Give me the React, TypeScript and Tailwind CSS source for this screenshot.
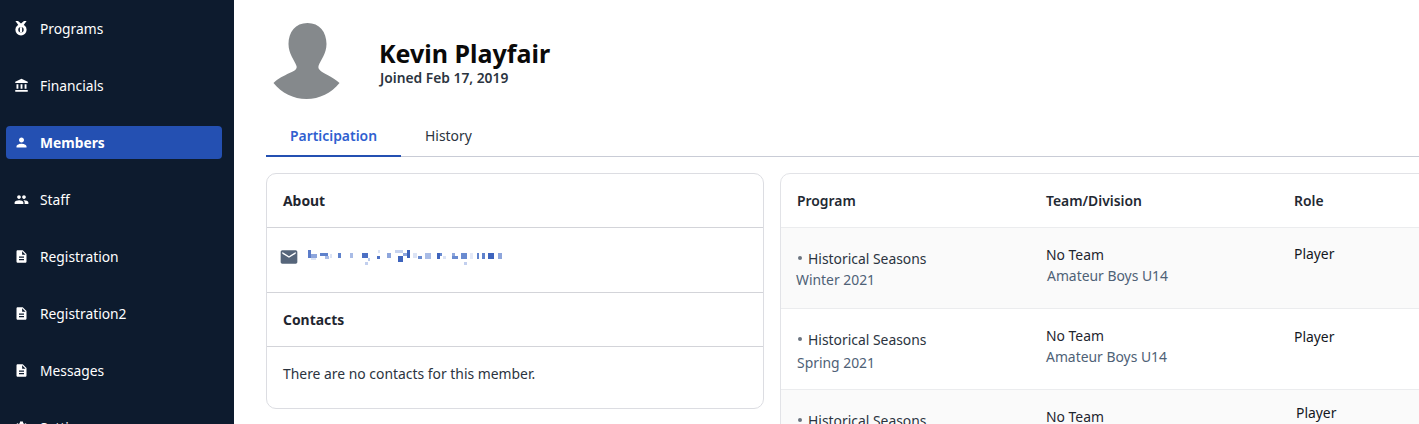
import React from "react";
import { MdAccountBalance, MdPerson, MdPeople, MdDescription, MdEmail, MdSettings } from "react-icons/md";

function Medal() {
  return (
    <svg width="18" height="18" viewBox="0 0 18 18" fill="none">
      <path d="M3.4 1H6L9 3.6 12 1h2.6L11 6H7z" fill="white" />
      <circle cx="9" cy="9.8" r="5.6" fill="white" />
      <circle cx="9" cy="9.8" r="2.7" fill="#0d1b2e" />
      <rect x="7.9" y="7.2" width="2.2" height="5.2" fill="white" />
    </svg>
  );
}

function Avatar() {
  return (
    <svg width="67" height="76" viewBox="0 0 66 76" className="shrink-0">
      <path
        d="M34 0C46 0 53 9 53 21C53 31 47 37 45 43C44 47 49 49 54 52C59 55 63 57 66 60C58 70 46 76 33 76C20 76 8 70 0 60C5 55 10 53 16 50C21 48 24 46 23 43C21 37 15 31 15 21C15 9 22 0 34 0Z"
        fill="#85898c"
      />
    </svg>
  );
}

const mosaic: [number, number, number, number, string][] = [
  [309, 250, 3, 8, "#5b7cc9"], [312, 254, 6, 4, "#8ea6dc"], [312, 258, 5, 2, "#dbe3f5"],
  [321, 253, 8, 3, "#5f82cc"], [326, 256, 4, 3, "#a9bce6"], [331, 254, 2, 4, "#dbe3f5"],
  [339, 253, 3, 5, "#5f82cc"], [351, 253, 3, 5, "#a9bce6"], [363, 253, 6, 5, "#4c70c4"],
  [369, 258, 2, 3, "#b8c8ea"], [366, 262, 3, 3, "#c2cfee"], [378, 256, 3, 3, "#4c70c4"],
  [379, 250, 2, 3, "#dbe3f5"], [388, 253, 4, 5, "#8ea6dc"],
  [396, 250, 8, 3, "#c5d2ef"], [408, 250, 3, 8, "#3e64bd"], [399, 256, 5, 6, "#3e64bd"],
  [404, 253, 4, 3, "#8ea6dc"], [414, 253, 4, 5, "#dbe3f5"], [419, 256, 4, 3, "#6a8bd0"],
  [426, 253, 6, 6, "#a9bce6"], [438, 253, 3, 6, "#3e64bd"], [441, 253, 2, 3, "#6a8bd0"],
  [444, 256, 3, 3, "#dbe3f5"], [453, 256, 6, 3, "#6a8bd0"], [453, 253, 3, 3, "#8ea6dc"],
  [462, 253, 6, 6, "#6a8bd0"], [465, 262, 3, 3, "#c2cfee"], [471, 253, 3, 6, "#e4e9f7"],
  [478, 253, 2, 6, "#5f82cc"], [483, 253, 3, 6, "#5f82cc"], [489, 253, 6, 6, "#3e64bd"],
  [499, 253, 4, 6, "#8ea6dc"],
];

function BlurredEmail() {
  return (
    <svg width="196" height="16" viewBox="308 250 196 16" className="block">
      {mosaic.map(([x, y, w, h, c], i) => (
        <rect key={i} x={x} y={y} width={w} height={h} fill={c} />
      ))}
    </svg>
  );
}

const nav: { label: string; icon: React.ReactNode; active?: boolean }[] = [
  { label: "Programs", icon: <Medal /> },
  { label: "Financials", icon: <MdAccountBalance size={15} /> },
  { label: "Members", icon: <MdPerson size={15} />, active: true },
  { label: "Staff", icon: <MdPeople size={15} /> },
  { label: "Registration", icon: <MdDescription size={15} /> },
  { label: "Registration2", icon: <MdDescription size={15} /> },
  { label: "Messages", icon: <MdDescription size={15} /> },
  { label: "Settings", icon: <MdSettings size={15} /> },
];

function Sidebar() {
  return (
    <aside className="w-[234px] shrink-0 bg-[#0d1b2e] pt-3 px-[6px] flex flex-col gap-6 overflow-hidden">
      {nav.map((n) => (
        <div
          key={n.label}
          className={`flex items-center h-[33px] w-[216px] shrink-0 rounded-[4px] pl-[6px] text-white text-[13.8px] leading-5 ${
            n.active ? "bg-[#2450b2] font-bold" : ""
          }`}
        >
          <span className="w-[18px] flex justify-center">{n.icon}</span>
          <span className="ml-[10px]">{n.label}</span>
        </div>
      ))}
    </aside>
  );
}

function Row({
  bg,
  prog,
  sub,
  subGap,
  subX,
  teamSubX,
  rolePt,
  roleX,
}: {
  bg: string;
  prog: string;
  sub: string;
  subGap: string;
  subX: string;
  teamSubX: string;
  rolePt: string;
  roleX: string;
}) {
  return (
    <div className={`flex h-[81px] shrink-0 border-b border-[#ebecee] pl-4 text-[13.9px] leading-5 ${bg}`}>
      <div className="w-[249px] shrink-0 pt-[21px]">
        <div className="text-[#2b3440] flex items-center">
          <span className="w-[4px] h-[4px] rounded-full bg-[#6b7480] ml-[1px] mr-[6px] -mt-[3px]" />
          <span>{prog}</span>
        </div>
        <div className={`text-[#4e6176] ${subGap} ${subX}`}>{sub}</div>
      </div>
      <div className="w-[248px] shrink-0 pt-[17px]">
        <div className="text-[#1f2630]">No Team</div>
        <div className={`text-[#4e6176] mt-[1px] ${teamSubX}`}>Amateur Boys U14</div>
      </div>
      <div className={`text-[#14181e] ${rolePt} ${roleX}`}>Player</div>
    </div>
  );
}

export default function App() {
  return (
    <div
      className="flex h-[424px] w-[1419px] overflow-hidden bg-white"
      style={{ fontFamily: '"Noto Sans", sans-serif' }}
    >
      <Sidebar />
      <main className="flex-1 min-w-0 pl-8 overflow-hidden">
        <div className="flex h-[116px] shrink-0 pl-[7px] pt-[23px]">
          <Avatar />
          <div className="ml-[39px] pt-[14px]">
            <h1 className="text-[25px] leading-[32px] font-bold text-[#0a0a0a]">Kevin Playfair</h1>
            <p className="ml-[1px] mt-[2px] text-[13.8px] leading-[14px] font-semibold text-[#2b3440]">Joined Feb 17, 2019</p>
          </div>
        </div>
        <div className="flex h-[41px] border-b border-[#c9ccd6] text-[13.9px] w-[1153px]">
          <div className="w-[135px] h-[41px] border-b-[2px] border-[#2450b2] text-center text-[#2f5fd0] font-semibold pt-[10px] leading-5">
            Participation
          </div>
          <div className="ml-6 text-[#2b3440] pt-[10px] leading-5">History</div>
        </div>
        <div className="flex gap-4 mt-4 items-start">
          <section className="w-[498px] h-[236px] shrink-0 border border-[#dcdde2] rounded-[10px] text-[#1f2630]">
            <div className="h-[54px] flex items-center px-4 pt-[2px] border-b border-[#d3d4d9] text-[13.9px] font-bold">About</div>
            <div className="h-[65px] flex items-start pt-[19px] pl-[12px] border-b border-[#d3d4d9] text-[#56657a]">
              <MdEmail size={20} className="shrink-0" />
              <span className="ml-[8px] mt-[3px]"><BlurredEmail /></span>
            </div>
            <div className="h-[54px] flex items-center px-4 pt-[2px] border-b border-[#d3d4d9] text-[13.9px] font-bold">Contacts</div>
            <div className="px-4 pt-[17px] text-[13.9px] leading-5 text-[#2b3440]">There are no contacts for this member.</div>
          </section>
          <section className="w-[700px] h-[300px] shrink-0 border border-[#e2e3e7] rounded-[10px] overflow-hidden flex flex-col">
            <div className="flex h-[54px] shrink-0 items-center pl-4 pt-[2px] border-b border-[#ebecee] text-[13.9px] font-semibold text-[#1f2933]">
              <div className="w-[249px] shrink-0">Program</div>
              <div className="w-[248px] shrink-0">Team/Division</div>
              <div>Role</div>
            </div>
            <Row bg="bg-[#fafafa]" prog="Historical Seasons" sub="Winter 2021" subGap="mt-[1px]" subX="-ml-[1px]" teamSubX="ml-[1px]" rolePt="pt-[16px]" roleX="" />
            <Row bg="bg-white" prog="Historical Seasons" sub="Spring 2021" subGap="mt-[3px]" subX="" teamSubX="" rolePt="pt-[18px]" roleX="" />
            <Row bg="bg-[#fafafa]" prog="Historical Seasons" sub="Fall 2020" subGap="mt-[1px]" subX="" teamSubX="" rolePt="pt-[13px]" roleX="ml-[2px]" />
          </section>
        </div>
      </main>
    </div>
  );
}
